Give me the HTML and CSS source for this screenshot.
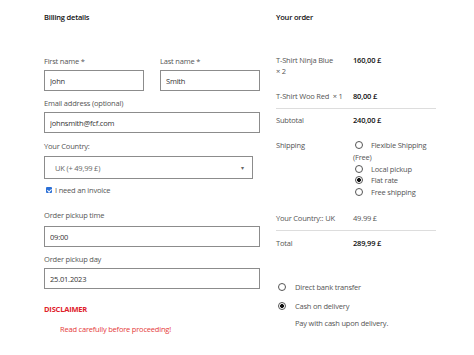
FILE: index.html
```html
<!DOCTYPE html>
<html lang="en">
<head>
  <meta charset="UTF-8" />
  <title>Checkout</title>
  <link rel="stylesheet" href="styles.css">
</head>
<body>
  <div class="checkout">
    <div class="billing">
      <h3>Billing details</h3>

      <div class="row">
        <div class="field half">
          <label>First name *</label>
          <input type="text" value="John" />
        </div>
        <div class="field half">
          <label>Last name *</label>
          <input type="text" value="Smith" />
        </div>
      </div>

      <div class="field">
        <label>Email address (optional)</label>
        <input type="text" value="johnsmith@fcf.com" />
      </div>

      <div class="field country">
        <label>Your Country:</label>
        <div class="select">
          <span>UK (+ 49,99 £)</span>
          <span class="arrow">▾</span>
        </div>
      </div>

      <div class="invoice">
        <input type="checkbox" id="invoice" checked />
        <label for="invoice">I need an invoice</label>
      </div>

      <div class="field pickup">
        <label>Order pickup time</label>
        <input type="text" value="09:00" />
      </div>

      <div class="field">
        <label>Order pickup day</label>
        <input type="text" value="25.01.2023" />
      </div>

      <div class="disclaimer">DISCLAIMER</div>
      <p class="warning">Read carefully before proceeding!</p>
    </div>

    <div class="order">
      <h3>Your order</h3>

      <table>
        <tr>
          <td class="name">T-Shirt Ninja Blue<br><span class="qty">×&nbsp;2</span></td>
          <td class="price">160,00 £</td>
        </tr>
        <tr class="last">
          <td class="name">T-Shirt Woo Red &nbsp;<span class="qty">×&nbsp;1</span></td>
          <td class="price">80,00 £</td>
        </tr>
        <tr class="after">
          <td>Subtotal</td>
          <td class="price">240,00 £</td>
        </tr>
        <tr>
          <td>Shipping</td>
          <td>
            <ul class="methods">
              <li><input type="radio" name="ship" />Flexible Shipping (Free)</li>
              <li><input type="radio" name="ship" />Local pickup</li>
              <li><input type="radio" name="ship" checked />Flat rate</li>
              <li><input type="radio" name="ship" />Free shipping</li>
            </ul>
          </td>
        </tr>
        <tr class="last">
          <td>Your Country:: UK</td>
          <td>49.99 £</td>
        </tr>
        <tr>
          <td>Total</td>
          <td class="price">289,99 £</td>
        </tr>
      </table>

      <ul class="payment">
        <li><input type="radio" name="pay" />Direct bank transfer</li>
        <li><input type="radio" name="pay" checked />Cash on delivery</li>
      </ul>
      <p class="pay-note">Pay with cash upon delivery.</p>
    </div>
  </div>
</body>
</html>
```

FILE: styles.css
```css
* {
  box-sizing: border-box;
  font-family: 'Open Sans', sans-serif;
}
body {
  margin: 0;
  background: #fff;
  color: #555;
  font-size: 7.5px;
  line-height: 10px;
  letter-spacing: -0.2px;
}
.checkout {
  display: flex;
  gap: 16px;
  padding: 12px 0 0 44px;
}
h3 {
  margin: 0;
  font-size: 7.5px;
  line-height: 10px;
  font-weight: 600;
  color: #111;
}
.billing {
  width: 216px;
}
.billing h3 {
  margin-bottom: 34px;
}
.row {
  display: flex;
  gap: 16px;
}
.field {
  margin-top: 7px;
}
.row .field {
  margin-top: 0;
}
.half {
  flex: 1;
}
.field label {
  display: block;
  margin-bottom: 4px;
}
.field input {
  display: block;
  width: 100%;
  height: 21px;
  margin: 0;
  padding: 0 5px;
  border: 1.5px solid #8c8c8c;
  font-size: 7.5px;
  letter-spacing: -0.2px;
  color: #333;
  outline: none;
}
.country {
  margin-top: 8px;
}
.country label {
  margin-bottom: 5px;
}
.select {
  width: 209px;
  height: 23px;
  border: 1.5px solid #8c8c8c;
  display: flex;
  align-items: center;
  justify-content: space-between;
  padding: 0 8px 0 10px;
  color: #666;
}
.arrow {
  font-size: 6px;
}
.invoice {
  display: flex;
  align-items: center;
  gap: 3px;
  margin-top: 6px;
  padding-left: 2px;
}
.invoice input {
  appearance: none;
  width: 6px;
  height: 6px;
  margin: 0;
  background: #2b6fd6;
  border-radius: 1px;
  position: relative;
}
.invoice input::after {
  content: "";
  position: absolute;
  left: 1.5px;
  top: 0.5px;
  width: 1.5px;
  height: 3px;
  border: solid #fff;
  border-width: 0 1px 1px 0;
  transform: rotate(45deg);
}
.pickup {
  margin-top: 15px;
}
.pickup label {
  margin-bottom: 6px;
}
.disclaimer {
  margin-top: 15px;
  color: #e0212b;
  font-weight: bold;
}
.warning {
  margin: 10px 0 0 16px;
  color: #e53a3a;
}
.order {
  width: 160px;
}
.order h3 {
  margin-bottom: 26px;
}
table {
  width: 100%;
  border-collapse: collapse;
}
td {
  padding: 7px 0;
  vertical-align: top;
  line-height: 11px;
}
td:first-child {
  width: 77px;
  padding-right: 6px;
}
.qty {
  white-space: nowrap;
}
tr.last td {
  border-bottom: 1px solid #ddd;
  padding-bottom: 6px;
}
tr.after td {
  padding-top: 6px;
}
.price {
  font-weight: 600;
  color: #111;
}
.methods {
  list-style: none;
  margin: 0;
  padding: 0;
  line-height: 11.75px;
}
input[type="radio"] {
  appearance: none;
  width: 8px;
  height: 8px;
  margin: 0 8px 0 2px;
  border: 1px solid #555;
  border-radius: 50%;
  vertical-align: -1px;
}
input[type="radio"]:checked {
  background: radial-gradient(circle, #111 0 1.8px, #fff 2.2px);
}
.payment {
  list-style: none;
  margin: 26px 0 0;
  padding: 0;
}
.payment li {
  line-height: 10px;
  margin-bottom: 9px;
}
.payment li:last-child {
  margin-bottom: 7px;
}
.payment input[type="radio"] {
  margin: 0 9px 0 2px;
}
.pay-note {
  margin: 0 0 0 19px;
}
```
